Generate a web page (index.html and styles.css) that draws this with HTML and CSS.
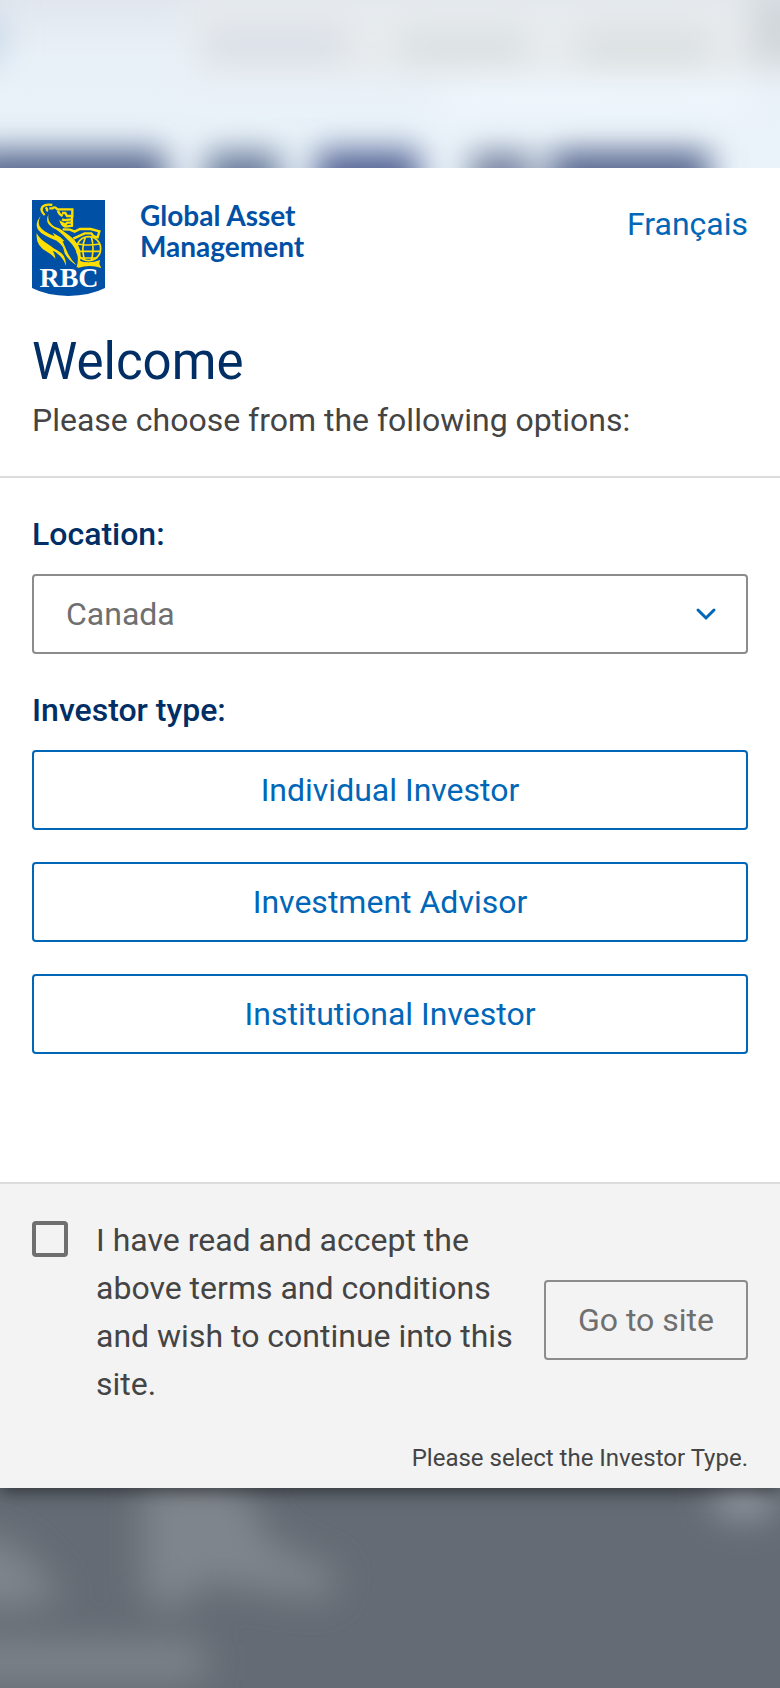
FILE: index.html
```html
<!DOCTYPE html>
<html lang="en">
<head>
  <meta charset="UTF-8" />
  <meta name="viewport" content="width=device-width, initial-scale=1" />
  <title>RBC Global Asset Management</title>
  <link rel="stylesheet" href="styles.css">
</head>
<body>

  <!-- Blurred page behind the modal -->
  <svg class="backdrop backdrop-top" viewBox="0 0 780 168" preserveAspectRatio="none" aria-hidden="true">
    <defs>
      <linearGradient id="sky" x1="0" y1="0" x2="0" y2="1">
        <stop offset="0" stop-color="#e2e7ee" />
        <stop offset="0.35" stop-color="#e9f1f8" />
        <stop offset="1" stop-color="#eaf3fa" />
      </linearGradient>
      <filter id="blurTop" x="-20%" y="-60%" width="140%" height="220%">
        <feGaussianBlur stdDeviation="16" />
      </filter>
    </defs>
    <rect width="780" height="168" fill="url(#sky)" />
    <g filter="url(#blurTop)">
      <rect x="-30" y="10" width="36" height="55" fill="#ccdae9" />
      <rect x="190" y="0" width="620" height="78" fill="#e7ebee" />
      <rect x="205" y="28" width="140" height="34" fill="#dadfe7" />
      <rect x="400" y="28" width="125" height="38" fill="#dbe1e2" />
      <rect x="580" y="28" width="130" height="38" fill="#dbe0e1" />
      <rect x="750" y="-10" width="60" height="75" fill="#d1d7dc" />
      <rect x="440" y="88" width="310" height="22" fill="#f2f9ff" />
      <rect x="-30" y="150" width="196" height="70" fill="#59698f" />
      <rect x="206" y="152" width="74" height="70" fill="#667899" />
      <rect x="316" y="150" width="104" height="70" fill="#526394" />
      <rect x="470" y="152" width="62" height="70" fill="#74819f" />
      <rect x="550" y="150" width="160" height="70" fill="#586890" />
    </g>
  </svg>

  <main class="modal" role="dialog" aria-labelledby="welcome">
    <header class="modal-header">
      <div class="top-row">
        <div class="brand">
          <svg class="shield" viewBox="36 30 219 288" role="img" aria-label="RBC">
            <path fill="#0051a5" d="M36 30H255V294Q210 317 145 318Q81 317 36 294Z" />
            <g fill="none" stroke="#fedf01" stroke-width="7">
              <!-- head -->
              <path d="M74 75Q60 62 67 51Q76 41 97 45M77 52Q84 58 80 64M88 55H98Q104 48 112 58H157V78H141L136 69H126M114 62Q116 72 128 78" />
              <path d="M156 80V107L136 110Q128 108 124 98L136 104L142 98H154M158 89H146Q134 92 126 88" />
              <!-- arm -->
              <path d="M128 118L150 119L164 125L180 117H212L238 124L233 142L220 138L214 130L194 130L160 146" />
            </g>
            <g fill="#fedf01">
              <!-- back and mane -->
              <path d="M86 72Q80 96 104 110L120 116Q136 128 150 138Q184 164 182 200Q181 218 176 232H170Q178 204 168 182Q160 164 140 146Q118 122 98 113Q72 98 86 72Z" />
              <path d="M62 78Q46 106 74 124Q86 132 104 139L98 128Q120 138 134 154L128 153Q134 166 134 178Q122 160 110 152Q92 146 72 134Q34 112 62 78Z" />
              <path d="M50 130Q60 148 80 160Q98 170 110 186L98 183Q106 194 106 206Q94 192 82 186Q46 168 50 130Z" />
              <path d="M84 168Q118 180 130 196Q138 208 138 228Q130 206 118 196Q104 184 84 168Z" />
              <path d="M120 148Q136 166 142 186Q150 206 170 226Q146 212 134 190Q130 168 120 148Z" />
              <path d="M178 212Q208 222 240 210L238 222L244 234Q208 222 174 234Z" />
            </g>
            <!-- globe -->
            <g fill="none" stroke="#fedf01" stroke-width="5">
              <circle cx="206" cy="176" r="36" />
              <path d="M173 162Q206 168 239 162M172 184H242M180 204H232M196 142Q182 174 194 210M214 140Q224 174 214 212" />
            </g>
            <text class="shield-text" x="147" y="291" text-anchor="middle">RBC</text>
          </svg>
          <p class="brand-name">Global Asset<br>Management</p>
        </div>
        <a class="lang-link" href="#" lang="fr">Français</a>
      </div>
      <h1 id="welcome">Welcome</h1>
      <p class="intro">Please choose from the following options:</p>
    </header>

    <form id="terms-form">
      <div class="options">
        <label class="field-label" for="location">Location:</label>
        <div class="select-wrap">
          <select id="location">
            <option>Canada</option>
          </select>
          <svg class="chevron" viewBox="0 0 22 14" aria-hidden="true">
            <path d="M3 3L11 11L19 3" />
          </svg>
        </div>

        <p class="field-label" id="investor-label">Investor type:</p>
        <div class="investor-list" role="group" aria-labelledby="investor-label">
          <button class="btn" type="button">Individual Investor</button>
          <button class="btn" type="button">Investment Advisor</button>
          <button class="btn" type="button">Institutional Investor</button>
        </div>
      </div>

      <footer class="modal-footer">
        <div class="accept-row">
          <input type="checkbox" id="accept">
          <label class="accept-text" for="accept">I have read and accept the above terms and conditions and wish to continue into this site.</label>
          <button class="btn btn-site" type="submit" disabled>Go to site</button>
        </div>
        <p class="hint">Please select the Investor Type.</p>
      </footer>
    </form>
  </main>

  <svg class="backdrop backdrop-bottom" viewBox="0 0 780 201" preserveAspectRatio="none" aria-hidden="true">
    <defs>
      <filter id="blurBottom" x="-20%" y="-30%" width="140%" height="160%">
        <feGaussianBlur stdDeviation="18" />
      </filter>
    </defs>
    <rect width="780" height="201" fill="#646b74" />
    <g filter="url(#blurBottom)" fill="#7f858c">
      <path d="M-40 40L20 60L65 110L20 120H-40Z" />
      <path d="M142 -20H235L270 55L340 85L325 112L205 94L175 125L142 110Z" />
      <rect x="-40" y="155" width="245" height="38" />
      <ellipse cx="744" cy="8" rx="32" ry="21" fill="#989fa8" />
    </g>
  </svg>

</body>
</html>
```
FILE: styles.css
```css
* {
  box-sizing: border-box;
}

body {
  margin: 0;
  min-height: 100vh;
  display: flex;
  flex-direction: column;
  background-color: #646b74;
  color: #444;
  font-family: Roboto, "Liberation Sans", sans-serif;
  font-size: 32px;
  line-height: 48px;
}

h1, p {
  margin: 0;
}

.backdrop {
  display: block;
  width: 100%;
}

.backdrop-top {
  height: 168px;
}

.backdrop-bottom {
  flex: 1;
  min-height: 200px;
}

.modal {
  position: relative;
  background-color: #fff;
  box-shadow: 0 4px 16px rgba(0, 0, 0, 0.5);
  clip-path: inset(0 0 -30px 0);
}

.modal-header {
  padding: 32px 32px 32px;
  border-bottom: 2px solid #dcdcdc;
}

.top-row {
  display: flex;
  justify-content: space-between;
  align-items: flex-start;
}

.brand {
  display: flex;
  gap: 35px;
}

.shield {
  width: 73px;
  height: 96px;
}

.shield-text {
  fill: #fff;
  font-family: "Liberation Serif", serif;
  font-size: 84px;
  font-weight: bold;
}

.brand-name {
  color: #0051a5;
  font-family: Lato, sans-serif;
  font-size: 28px;
  font-weight: bold;
  line-height: 31px;
}

.lang-link {
  color: #0067b8;
  text-decoration: none;
}

h1 {
  margin-top: 34px;
  color: #002e65;
  font-size: 51px;
  font-weight: normal;
  line-height: 64px;
}

.intro {
  margin-top: 2px;
}

.options {
  padding: 32px 32px 128px;
}

.field-label {
  display: block;
  margin-bottom: 16px;
  color: #002e65;
  font-weight: 500;
}

.select-wrap {
  position: relative;
  margin-bottom: 32px;
}

select {
  display: block;
  width: 100%;
  height: 80px;
  padding: 0 32px;
  appearance: none;
  background-color: #fff;
  border: 2px solid #8c8c8c;
  border-radius: 4px;
  color: #6f6f6f;
  font: inherit;
}

.chevron {
  position: absolute;
  top: 33px;
  right: 31px;
  width: 22px;
  height: 14px;
  fill: none;
  stroke: #0067b8;
  stroke-width: 3;
  stroke-linecap: round;
  pointer-events: none;
}

.investor-list {
  display: flex;
  flex-direction: column;
  gap: 32px;
}

.btn {
  height: 80px;
  padding: 0 32px;
  background-color: #fff;
  border: 2px solid #0067b8;
  border-radius: 4px;
  color: #0067b8;
  font: inherit;
  cursor: pointer;
}

.modal-footer {
  padding: 32px 32px 12px;
  background-color: #f3f3f3;
  border-top: 2px solid #dcdcdc;
}

.accept-row {
  display: flex;
  align-items: center;
}

#accept {
  flex: none;
  align-self: flex-start;
  width: 36px;
  height: 36px;
  margin: 5px 28px 0 0;
  appearance: none;
  border: 4px solid #6f6f6f;
  border-radius: 4px;
}

#accept:checked {
  background-color: #0067b8;
}

.accept-text {
  flex: 1;
  margin-right: 24px;
}

.btn-site {
  flex: none;
  margin-top: 16px;
  background-color: transparent;
  border-color: #8c8c8c;
  color: #6f6f6f;
}

.hint {
  margin-top: 32px;
  font-size: 24px;
  line-height: 36px;
  text-align: right;
}
```
